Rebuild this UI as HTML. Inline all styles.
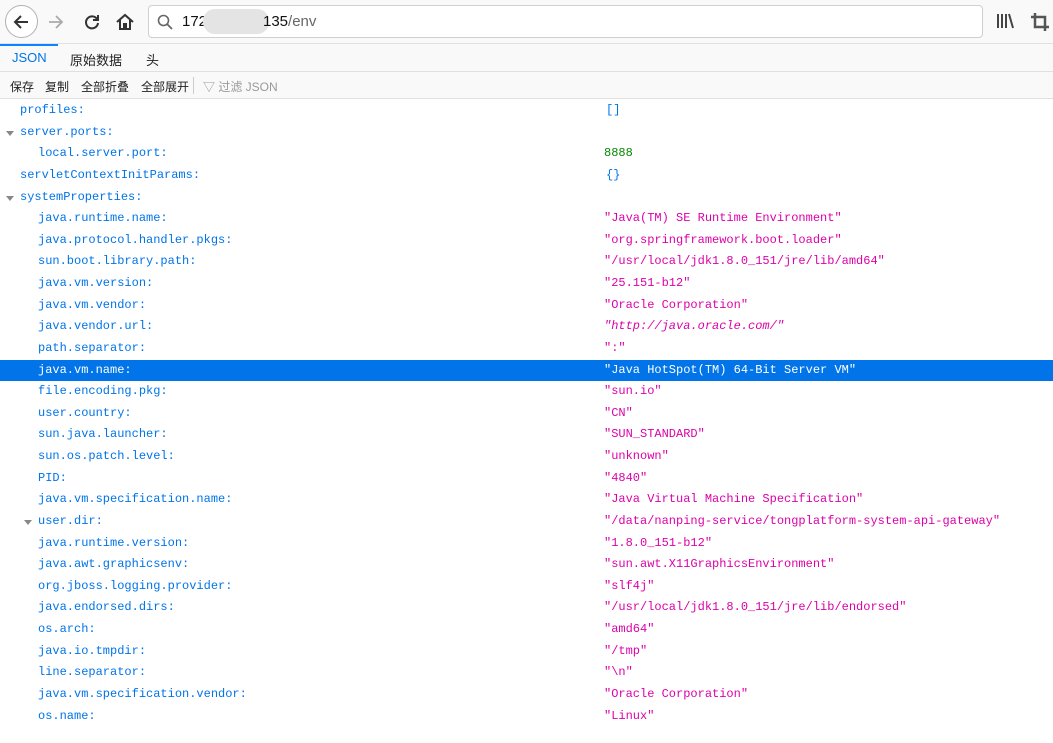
<!DOCTYPE html>
<html><head><meta charset="utf-8"><style>
*{margin:0;padding:0;box-sizing:border-box}
body{width:1053px;height:743px;overflow:hidden;background:#fff;font-family:"Liberation Sans","Noto Sans CJK SC",sans-serif;position:relative}
.nav{position:absolute;left:0;top:0;width:1053px;height:44px;background:#f9f9fa;border-bottom:1px solid #e0e0e2}
.url{position:absolute;left:148px;top:5px;width:835px;height:33px;background:#fff;border:1px solid #cfcfd3;border-radius:4px}
.tabs{position:absolute;left:0;top:44px;width:1053px;height:28px;background:#f9f9fa;border-bottom:1px solid #e0e0e2;font-size:13px}
.tabs span{position:absolute;top:6px}
.tools{position:absolute;left:0;top:72px;width:1053px;height:27px;background:#f9f9fa;border-bottom:1px solid #e0e0e2;font-size:12px;color:#222}
.tools span{position:absolute;top:6px}
.rows{position:absolute;left:0;top:100px;width:1053px;font-family:"Liberation Mono",monospace;font-size:12px}
.r{position:relative;height:21.64px;line-height:21.64px;color:#0074e8;white-space:pre}
.r .k{position:absolute}
.r .v{position:absolute;left:604px}
.s{color:#dd00a9}.n{color:#058b00}.b{color:#0074e8}
.r.sel{background:#0074e8;color:#fff}.r.sel .v{color:#fff}
.tw{position:absolute;width:0;height:0;border-left:4px solid transparent;border-right:4px solid transparent;border-top:5px solid #888;top:9px}
</style></head><body>
<div class="nav">
 <div style="position:absolute;left:5px;top:5px;width:33px;height:33px;border:1px solid #b1b1b3;border-radius:50%;background:#fff"></div>
 <svg style="position:absolute;left:11px;top:12px" width="20" height="20" viewBox="0 0 20 20"><path d="M17 10H4M10 4L4 10l6 6" stroke="#333" stroke-width="2" fill="none"/></svg>
 <svg style="position:absolute;left:46px;top:12px" width="20" height="20" viewBox="0 0 20 20"><path d="M3 10h13M10 4l6 6-6 6" stroke="#aaa" stroke-width="1.8" fill="none"/></svg>
 <svg style="position:absolute;left:82px;top:12px" width="20" height="20" viewBox="0 0 20 20"><path d="M15 7A6 6 0 1 0 16 11" stroke="#333" stroke-width="2" fill="none"/><path d="M16 3v5h-5" stroke="#333" stroke-width="2" fill="none"/></svg>
 <svg style="position:absolute;left:115px;top:12px" width="20" height="20" viewBox="0 0 20 20"><path d="M2 10L10 3l8 7M5 8v9h4v-5h2v5h4V8" stroke="#333" stroke-width="2" fill="none"/></svg>
 <div class="url">
  <svg style="position:absolute;left:8px;top:8px" width="16" height="16" viewBox="0 0 16 16"><circle cx="6.5" cy="6.5" r="5" stroke="#666" stroke-width="1.6" fill="none"/><path d="M10 10l5 5" stroke="#666" stroke-width="1.8"/></svg>
  <span style="position:absolute;left:33px;top:7px;font-size:15px;color:#111">172</span>
  <div style="position:absolute;left:54px;top:3px;width:66px;height:25px;border-radius:12px;background:#e4e4e4"></div>
  <span style="position:absolute;left:114px;top:7px;font-size:15px;color:#111">135<span style="color:#666">/env</span></span>
 </div>
 <svg style="position:absolute;left:996px;top:13px" width="18" height="16" viewBox="0 0 18 16"><path d="M2 1v14M6 1v14M10 1v14M13 1l4 14" stroke="#444" stroke-width="2"/></svg>
 <svg style="position:absolute;left:1031px;top:13px" width="18" height="18" viewBox="0 0 18 18"><path d="M4 0v14h14M0 4h14v14" stroke="#555" stroke-width="2.5" fill="none"/></svg>
</div>
<div class="tabs">
 <div style="position:absolute;left:0;top:0;width:58px;height:2px;background:#0a84ff"></div>
 <span style="left:12px;color:#0074e8">JSON</span>
 <span style="left:70px;color:#222">原始数据</span>
 <span style="left:146px;color:#222">头</span>
</div>
<div class="tools">
 <span style="left:10px">保存</span><span style="left:45px">复制</span><span style="left:81px">全部折叠</span><span style="left:141px">全部展开</span>
 <div style="position:absolute;left:193px;top:5px;width:1px;height:17px;background:#ccc"></div>
 <span style="left:203px;color:#999">▽ 过滤 JSON</span>
</div>
<div class="rows">
<div class="r"><span class="k" style="left:20px">profiles:</span><span class="v b" style="left:606px">[]</span></div>
<div class="r"><i class="tw" style="left:6px"></i><span class="k" style="left:20px">server.ports:</span></div>
<div class="r"><span class="k" style="left:38px">local.server.port:</span><span class="v n">8888</span></div>
<div class="r"><span class="k" style="left:20px">servletContextInitParams:</span><span class="v b" style="left:606px">{}</span></div>
<div class="r"><i class="tw" style="left:6px"></i><span class="k" style="left:20px">systemProperties:</span></div>
<div class="r"><span class="k" style="left:38px">java.runtime.name:</span><span class="v s">"Java(TM) SE Runtime Environment"</span></div>
<div class="r"><span class="k" style="left:38px">java.protocol.handler.pkgs:</span><span class="v s">"org.springframework.boot.loader"</span></div>
<div class="r"><span class="k" style="left:38px">sun.boot.library.path:</span><span class="v s">"/usr/local/jdk1.8.0_151/jre/lib/amd64"</span></div>
<div class="r"><span class="k" style="left:38px">java.vm.version:</span><span class="v s">"25.151-b12"</span></div>
<div class="r"><span class="k" style="left:38px">java.vm.vendor:</span><span class="v s">"Oracle Corporation"</span></div>
<div class="r"><span class="k" style="left:38px">java.vendor.url:</span><span class="v s" style="font-style:italic">"http://java.oracle.com/"</span></div>
<div class="r"><span class="k" style="left:38px">path.separator:</span><span class="v s">":"</span></div>
<div class="r sel"><span class="k" style="left:38px">java.vm.name:</span><span class="v">"Java HotSpot(TM) 64-Bit Server VM"</span></div>
<div class="r"><span class="k" style="left:38px">file.encoding.pkg:</span><span class="v s">"sun.io"</span></div>
<div class="r"><span class="k" style="left:38px">user.country:</span><span class="v s">"CN"</span></div>
<div class="r"><span class="k" style="left:38px">sun.java.launcher:</span><span class="v s">"SUN_STANDARD"</span></div>
<div class="r"><span class="k" style="left:38px">sun.os.patch.level:</span><span class="v s">"unknown"</span></div>
<div class="r"><span class="k" style="left:38px">PID:</span><span class="v s">"4840"</span></div>
<div class="r"><span class="k" style="left:38px">java.vm.specification.name:</span><span class="v s">"Java Virtual Machine Specification"</span></div>
<div class="r"><i class="tw" style="left:24px"></i><span class="k" style="left:38px">user.dir:</span><span class="v s">"/data/nanping-service/tongplatform-system-api-gateway"</span></div>
<div class="r"><span class="k" style="left:38px">java.runtime.version:</span><span class="v s">"1.8.0_151-b12"</span></div>
<div class="r"><span class="k" style="left:38px">java.awt.graphicsenv:</span><span class="v s">"sun.awt.X11GraphicsEnvironment"</span></div>
<div class="r"><span class="k" style="left:38px">org.jboss.logging.provider:</span><span class="v s">"slf4j"</span></div>
<div class="r"><span class="k" style="left:38px">java.endorsed.dirs:</span><span class="v s">"/usr/local/jdk1.8.0_151/jre/lib/endorsed"</span></div>
<div class="r"><span class="k" style="left:38px">os.arch:</span><span class="v s">"amd64"</span></div>
<div class="r"><span class="k" style="left:38px">java.io.tmpdir:</span><span class="v s">"/tmp"</span></div>
<div class="r"><span class="k" style="left:38px">line.separator:</span><span class="v s">"\n"</span></div>
<div class="r"><span class="k" style="left:38px">java.vm.specification.vendor:</span><span class="v s">"Oracle Corporation"</span></div>
<div class="r"><span class="k" style="left:38px">os.name:</span><span class="v s">"Linux"</span></div>
</div>
</body></html>
